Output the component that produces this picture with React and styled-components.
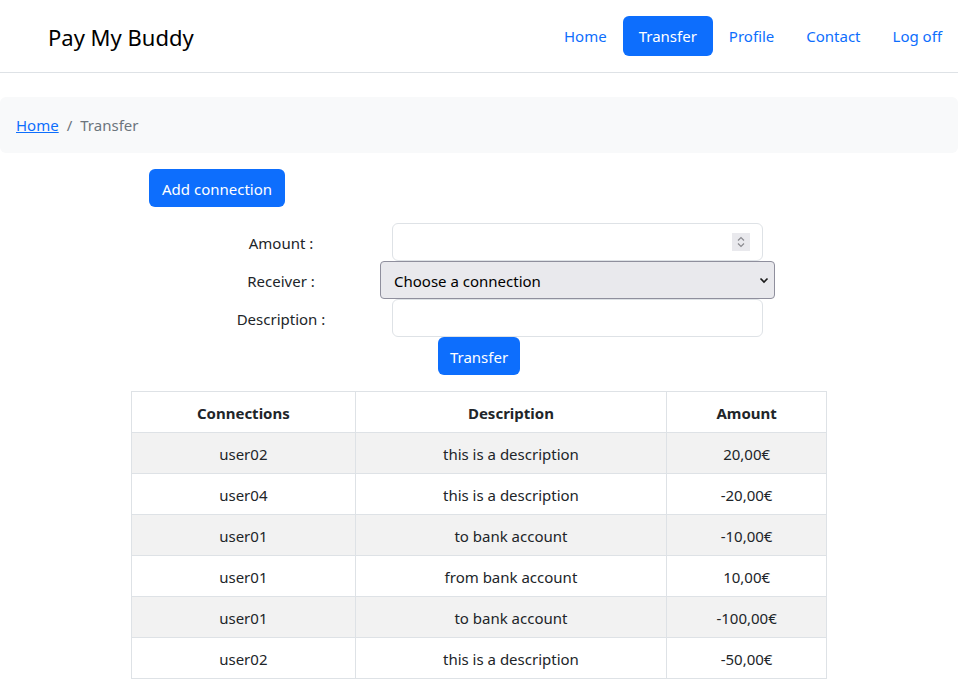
import React, { useState } from 'react';
import styled, { createGlobalStyle } from 'styled-components';

const GlobalStyle = createGlobalStyle`
    body {
        margin: 0;
        font-family: "Noto Sans", "Open Sans", sans-serif;
        font-size: 15px;
        line-height: 1.5;
        color: #212529;
        background: #fff;
    }
    * { box-sizing: border-box; }
`;

const transactions = [
    { user: 'user02', description: 'this is a description', amount: '20,00€' },
    { user: 'user04', description: 'this is a description', amount: '-20,00€' },
    { user: 'user01', description: 'to bank account', amount: '-10,00€' },
    { user: 'user01', description: 'from bank account', amount: '10,00€' },
    { user: 'user01', description: 'to bank account', amount: '-100,00€' },
    { user: 'user02', description: 'this is a description', amount: '-50,00€' },
];

const links = ['Home', 'Transfer', 'Profile', 'Contact', 'Log off'];

function App() {
    const [amount, setAmount] = useState('');
    const [receiver, setReceiver] = useState('');
    const [description, setDescription] = useState('');

    return (
        <>
            <GlobalStyle />
            <Navbar>
                <Brand>Pay My Buddy</Brand>
                <NavList>
                    {links.map((l) => (
                        <NavLink key={l} href="#" $active={l === 'Transfer'}>{l}</NavLink>
                    ))}
                </NavList>
            </Navbar>

            <Breadcrumb>
                <CrumbLink href="#">Home</CrumbLink>
                <Separator>/</Separator>
                <Current>Transfer</Current>
            </Breadcrumb>

            <Container>
                <AddButton>Add connection</AddButton>

                <Form onSubmit={(e) => e.preventDefault()}>
                    <Label htmlFor="amount">Amount :</Label>
                    <FieldCell>
                        <Input
                            id="amount"
                            type="text"
                            value={amount}
                            onChange={(e) => setAmount(e.target.value)}
                        />
                        <Spinner>
                            <svg width="10" height="14" viewBox="0 0 10 14" fill="none" stroke="#8a8a8f" strokeWidth="1.2">
                                <path d="M2 5.5 L5 2.5 L8 5.5" />
                                <path d="M2 8.5 L5 11.5 L8 8.5" />
                            </svg>
                        </Spinner>
                    </FieldCell>

                    <Label htmlFor="receiver">Receiver :</Label>
                    <FieldCell>
                        <Select
                            id="receiver"
                            value={receiver}
                            onChange={(e) => setReceiver(e.target.value)}
                        >
                            <option value="">Choose a connection</option>
                            <option value="user01">user01</option>
                            <option value="user02">user02</option>
                            <option value="user04">user04</option>
                        </Select>
                        <Chevron>
                            <svg width="10" height="7" viewBox="0 0 10 7" fill="none" stroke="#1b1b1b" strokeWidth="1.6">
                                <path d="M1.5 1.5 L5 5 L8.5 1.5" />
                            </svg>
                        </Chevron>
                    </FieldCell>

                    <Label htmlFor="description">Description :</Label>
                    <FieldCell>
                        <Input
                            id="description"
                            type="text"
                            value={description}
                            onChange={(e) => setDescription(e.target.value)}
                        />
                    </FieldCell>
                </Form>

                <SubmitRow>
                    <Button type="submit">Transfer</Button>
                </SubmitRow>

                <Table>
                    <thead>
                        <tr>
                            <Th $w={224}>Connections</Th>
                            <Th $w={312}>Description</Th>
                            <Th $w={160}>Amount</Th>
                        </tr>
                    </thead>
                    <tbody>
                        {transactions.map((t, i) => (
                            <Row key={i} $striped={i % 2 === 0}>
                                <Td>{t.user}</Td>
                                <Td>{t.description}</Td>
                                <Td>{t.amount}</Td>
                            </Row>
                        ))}
                    </tbody>
                </Table>
            </Container>
        </>
    );
}

export default App;

const Navbar = styled.nav`
    height: 73px;
    display: flex;
    align-items: center;
    justify-content: space-between;
    padding-left: 48px;
    border-bottom: 1px solid #dee2e6;
`;

const Brand = styled.div`
    font-size: 22px;
    color: #000;
    margin-top: 2px;
`;

const NavList = styled.div`
    display: flex;
    align-items: center;
`;

const NavLink = styled.a`
    display: block;
    height: 40px;
    line-height: 41px;
    padding: 0 16px;
    border-radius: 6px;
    text-decoration: none;
    color: ${(p) => (p.$active ? '#fff' : '#0d6efd')};
    background-color: ${(p) => (p.$active ? '#0d6efd' : 'transparent')};
`;

const Breadcrumb = styled.div`
    margin-top: 24px;
    height: 56px;
    padding: 1px 16px 0;
    display: flex;
    align-items: center;
    background-color: #f8f9fa;
    border-radius: 6px;
`;

const CrumbLink = styled.a`
    color: #0d6efd;
    text-decoration: underline;
`;

const Separator = styled.span`
    color: #6c757d;
    padding: 0 8px;
`;

const Current = styled.span`
    color: #6c757d;
`;

const Container = styled.div`
    width: 696px;
    margin: 16px auto 0;
`;

const Button = styled.button`
    height: 38px;
    padding: 1px 12px 0;
    border: none;
    border-radius: 6px;
    background-color: #0d6efd;
    color: #fff;
    font-family: inherit;
    font-size: 15px;
    cursor: pointer;

    &:hover {
        background-color: #0b5ed7;
    }
`;

const AddButton = styled(Button)`
    margin-left: 18px;
    padding: 1px 13px 0;
`;

const Form = styled.form`
    display: grid;
    grid-template-columns: 198px 395px;
    grid-auto-rows: 38px;
    margin: 16px 0 0 51px;
`;

const Label = styled.label`
    display: flex;
    align-items: center;
    justify-content: center;
    padding-top: 2px;
    color: #212529;
`;

const FieldCell = styled.div`
    position: relative;
    display: flex;
`;

const Input = styled.input`
    width: 100%;
    margin: 0 12px;
    padding: 6px 12px;
    border: 1px solid #dee2e6;
    border-radius: 6px;
    font-family: inherit;
    font-size: 15px;
    outline: none;

    &:focus {
        border-color: #86b7fe;
    }
`;

const Spinner = styled.span`
    position: absolute;
    right: 25px;
    top: 10px;
    width: 18px;
    height: 18px;
    display: flex;
    align-items: center;
    justify-content: center;
    background-color: #e9e9ed;
`;

const Select = styled.select`
    width: 100%;
    appearance: none;
    padding: 1px 32px 0 13px;
    border: 1px solid #8f8f9d;
    border-radius: 4px;
    background-color: #e9e9ed;
    color: #000;
    font-family: inherit;
    font-size: 15px;
`;

const Chevron = styled.span`
    position: absolute;
    right: 6px;
    top: 16px;
    display: flex;
    pointer-events: none;
`;

const SubmitRow = styled.div`
    display: flex;
    justify-content: center;
`;

const Table = styled.table`
    width: 696px;
    margin-top: 16px;
    border-collapse: collapse;
`;

const Th = styled.th`
    width: ${(p) => p.$w}px;
    height: 41px;
    padding: 9px 8px 7px;
    border: 1px solid #dee2e6;
    font-weight: bold;
    text-align: center;
`;

const Row = styled.tr`
    background-color: ${(p) => (p.$striped ? '#f2f2f2' : '#fff')};
`;

const Td = styled.td`
    height: 41px;
    padding: 9px 8px 7px;
    border: 1px solid #dee2e6;
    text-align: center;
`;
